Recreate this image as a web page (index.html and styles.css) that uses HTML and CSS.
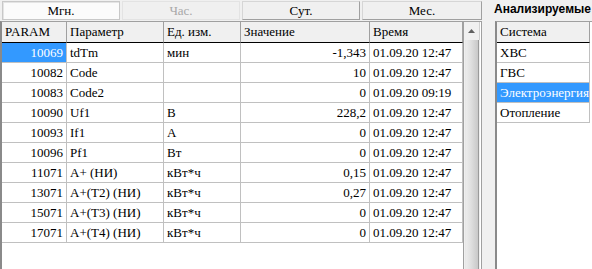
FILE: index.html
```html
<!doctype html>
<html lang="ru">
  <head>
    <meta charset="UTF-8" />
    <title>Параметры</title>
    <link rel="stylesheet" href="styles.css">
  </head>
  <body>
    <div class="window">
      <div class="left">
        <div class="tabs">
          <button class="tab active">Мгн.</button>
          <button class="tab disabled">Час.</button>
          <button class="tab">Сут.</button>
          <button class="tab last">Мес.</button>
        </div>
        <div class="frame">
          <div class="grid">
            <div class="hd">PARAM</div>
            <div class="hd">Параметр</div>
            <div class="hd">Ед. изм.</div>
            <div class="hd">Значение</div>
            <div class="hd">Время</div>

            <div class="c num sel">10069</div><div class="c">tdTm</div><div class="c">мин</div><div class="c num">-1,343</div><div class="c">01.09.20 12:47</div>
            <div class="c num">10082</div><div class="c">Code</div><div class="c"></div><div class="c num">10</div><div class="c">01.09.20 12:47</div>
            <div class="c num">10083</div><div class="c">Code2</div><div class="c"></div><div class="c num">0</div><div class="c">01.09.20 09:19</div>
            <div class="c num">10090</div><div class="c">Uf1</div><div class="c">В</div><div class="c num">228,2</div><div class="c">01.09.20 12:47</div>
            <div class="c num">10093</div><div class="c">If1</div><div class="c">А</div><div class="c num">0</div><div class="c">01.09.20 12:47</div>
            <div class="c num">10096</div><div class="c">Pf1</div><div class="c">Вт</div><div class="c num">0</div><div class="c">01.09.20 12:47</div>
            <div class="c num">11071</div><div class="c">A+ (НИ)</div><div class="c">кВт*ч</div><div class="c num">0,15</div><div class="c">01.09.20 12:47</div>
            <div class="c num">13071</div><div class="c">A+(T2) (НИ)</div><div class="c">кВт*ч</div><div class="c num">0,27</div><div class="c">01.09.20 12:47</div>
            <div class="c num">15071</div><div class="c">A+(T3) (НИ)</div><div class="c">кВт*ч</div><div class="c num">0</div><div class="c">01.09.20 12:47</div>
            <div class="c num">17071</div><div class="c">A+(T4) (НИ)</div><div class="c">кВт*ч</div><div class="c num">0</div><div class="c">01.09.20 12:47</div>
          </div>
          <div class="scrollbar">
            <div class="arrow">
              <svg width="7" height="4" viewBox="0 0 7 4"><path d="M0 4 L3.5 0 L7 4 Z" fill="#606060"/></svg>
            </div>
            <div class="thumb"></div>
          </div>
        </div>
      </div>

      <div class="right">
        <div class="title">Анализируемые</div>
        <div class="frame side">
          <div class="list">
            <div class="hd">Система</div>
            <div class="c">ХВС</div>
            <div class="c">ГВС</div>
            <div class="c sel">Электроэнергия</div>
            <div class="c">Отопление</div>
          </div>
        </div>
      </div>
    </div>
  </body>
</html>
```

FILE: styles.css
```css
html,
body {
  margin: 0;
  padding: 0;
  overflow: hidden;
}

body {
  width: 592px;
  height: 269px;
  background-color: #f0f0f0;
  font-family: "Liberation Serif", "Times New Roman", serif;
  font-size: 13px;
  color: #000;
}

.window {
  display: flex;
  height: 269px;
}

.left {
  width: 482px;
  display: flex;
  flex-direction: column;
}

.tabs {
  display: flex;
  gap: 2px;
  padding: 1px 0 0 2px;
  height: 20px;
  box-sizing: border-box;
}

.tab {
  width: 118px;
  height: 19px;
  margin: 0;
  padding: 0;
  font-family: "Liberation Serif", "Times New Roman", serif;
  font-size: 13px;
  line-height: 17px;
  color: #000;
  background-color: #f0f0f0;
  border: 1px solid #d6d6d6;
  border-right-color: #a0a0a0;
  border-bottom-color: #a0a0a0;
  box-sizing: border-box;
}

.tab.active {
  background-color: #fbfbfb;
  border: 1px solid #c8c8c8;
  box-shadow: inset 1px 1px 0 #e4e4e4;
}

.tab.disabled {
  color: #a8a8a8;
  border-color: #e3e3e3;
}

.tab.last {
  width: 120px;
}

.frame {
  display: flex;
  flex: 1;
  margin-top: 1px;
  background-color: #fff;
  border-top: 1px solid #a0a0a0;
  border-left: 2px solid #8a8a8a;
  border-right: 1px solid #a0a0a0;
  overflow: hidden;
}

.grid {
  display: grid;
  grid-template-columns: 65px 97px 77px 129px 93px;
  grid-auto-rows: 20px;
  grid-template-rows: 21px;
  align-content: start;
}

.hd {
  background-color: #f0f0f0;
  border-right: 1px solid #a0a0a0;
  border-bottom: 1px solid #000;
  padding-left: 3px;
  line-height: 20px;
  white-space: nowrap;
  overflow: hidden;
  box-sizing: border-box;
}

.c {
  border-right: 1px solid #c0c0c0;
  border-bottom: 1px solid #c0c0c0;
  padding: 0 3px;
  line-height: 20px;
  white-space: nowrap;
  overflow: hidden;
  box-sizing: border-box;
}

.num {
  text-align: right;
}

.sel {
  background-color: #3399ff;
  color: #fff;
}

.scrollbar {
  width: 17px;
  display: flex;
  flex-direction: column;
  background-color: #f0f0f0;
  border-left: 1px solid #a0a0a0;
  box-sizing: border-box;
}

.arrow {
  height: 18px;
  display: flex;
  align-items: center;
  justify-content: center;
  border-right: 1px solid #d0d0d0;
}

.thumb {
  flex: 1;
  margin: 0 1px 0 1px;
  border-left: 1px solid #e8e8e8;
  border-right: 1px solid #9a9a9a;
  background: linear-gradient(to right, #ececec, #e0e0e0 40%, #c8c8c8);
}

.right {
  margin-left: 12px;
  flex: 1;
  display: flex;
  flex-direction: column;
}

.title {
  height: 21px;
  font-family: "Liberation Sans", Arial, sans-serif;
  font-weight: bold;
  font-size: 12px;
  line-height: 18px;
  white-space: nowrap;
}

.frame.side {
  margin-top: 0;
  margin-left: 1px;
  border-right: none;
}

.list {
  display: grid;
  grid-template-columns: 93px;
  grid-auto-rows: 20px;
  grid-template-rows: 21px;
  align-content: start;
}
```
